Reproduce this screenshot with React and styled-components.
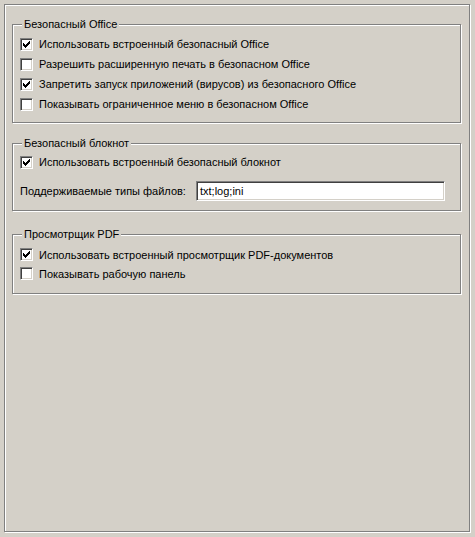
import React from 'react';
import styled, { createGlobalStyle } from 'styled-components';

const GlobalStyle = createGlobalStyle`
    html, body {
        margin: 0;
        padding: 0;
        background: #D4D0C8;
    }
    body {
        font-family: "Liberation Sans", Arial, sans-serif;
        font-size: 11px;
        color: #000;
    }
`;

const Page = styled.div`
    width: 475px;
    height: 537px;
    padding: 4px;
    box-sizing: border-box;
`;

const Etched = styled.div`
    border: 1px solid #808080;
    box-shadow: inset 1px 1px 0 #fff, 1px 1px 0 #fff;
`;

const OuterFrame = styled(Etched)`
    width: 466px;
    height: 528px;
    box-sizing: border-box;
    padding: 19px 8px 0 7px;
    display: flex;
    flex-direction: column;
`;

const GroupBox = styled(Etched)`
    padding: ${p => p.$top}px 0 0 7px;
    margin-bottom: ${p => p.$after || 0}px;
    height: ${p => p.$height}px;
    box-sizing: border-box;
    display: flex;
    flex-direction: column;
`;

const Legend = styled.div`
    align-self: flex-start;
    margin: ${p => -p.$top - 8}px 0 ${p => p.$top - 6}px 2px;
    padding: 0 2px;
    height: 14px;
    line-height: 14px;
    background: #D4D0C8;
`;

const Row = styled.label`
    display: flex;
    align-items: center;
    height: ${p => p.$h || 20}px;
    white-space: nowrap;
`;

const Box = styled.span`
    width: 13px;
    height: 13px;
    box-sizing: border-box;
    flex: none;
    background: #fff;
    border-top: 1px solid #808080;
    border-left: 1px solid #808080;
    border-right: 1px solid #fff;
    border-bottom: 1px solid #fff;
    box-shadow: inset 1px 1px 0 #404040, inset -1px -1px 0 #D4D0C8;
    margin-right: 6px;
    display: flex;
    align-items: center;
    justify-content: center;
`;

const FieldLabel = styled.span`
    width: 176px;
    flex: none;
`;

const TextInput = styled.div`
    width: 249px;
    height: 20px;
    box-sizing: border-box;
    background: #fff;
    border-top: 1px solid #808080;
    border-left: 1px solid #808080;
    border-right: 1px solid #fff;
    border-bottom: 1px solid #fff;
    box-shadow: inset 1px 1px 0 #404040, inset -1px -1px 0 #D4D0C8;
    padding: 0 3px;
    line-height: 18px;
`;

function Tick() {
    return (
        <svg width="7" height="7" viewBox="0 0 7 7" shapeRendering="crispEdges">
            <path d="M0 2h1v3H0zM1 3h1v3H1zM2 4h1v3H2zM3 3h1v3H3zM4 2h1v3H4zM5 1h1v3H5zM6 0h1v3H6z" fill="#000" />
        </svg>
    );
}

function Check({ checked, h, children }) {
    return (
        <Row $h={h}>
            <Box>{checked && <Tick />}</Box>
            <span>{children}</span>
        </Row>
    );
}

export default function App() {
    return (
        <Page>
            <GlobalStyle />
            <OuterFrame>
                <GroupBox $top={9} $height={99} $after={20}>
                    <Legend $top={9}>Безопасный Office</Legend>
                    <Check checked>Использовать встроенный безопасный Office</Check>
                    <Check>Разрешить расширенную печать в безопасном Office</Check>
                    <Check checked>Запретить запуск приложений (вирусов) из безопасного Office</Check>
                    <Check>Показывать ограниченное меню в безопасном Office</Check>
                </GroupBox>
                <GroupBox $top={8} $height={68} $after={23}>
                    <Legend $top={8}>Безопасный блокнот</Legend>
                    <Check checked>Использовать встроенный безопасный блокнот</Check>
                    <Row $h={38}>
                        <FieldLabel>Поддерживаемые типы файлов:</FieldLabel>
                        <TextInput>txt;log;ini</TextInput>
                    </Row>
                </GroupBox>
                <GroupBox $top={10} $height={60}>
                    <Legend $top={10}>Просмотрщик PDF</Legend>
                    <Check checked h={19}>Использовать встроенный просмотрщик PDF-документов</Check>
                    <Check h={19}>Показывать рабочую панель</Check>
                </GroupBox>
            </OuterFrame>
        </Page>
    );
}
